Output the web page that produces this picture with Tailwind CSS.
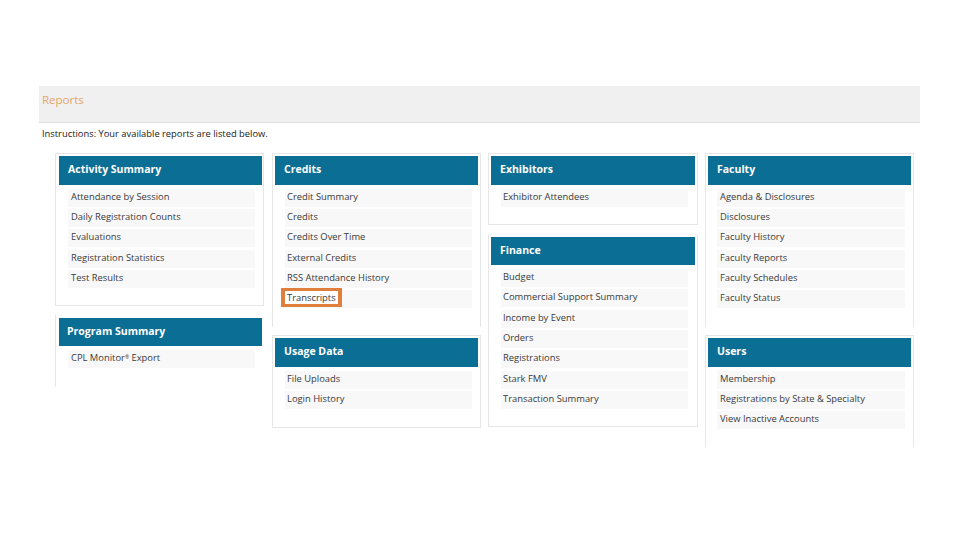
<!DOCTYPE html>
<html lang="en">
<head>
    <meta charset="UTF-8">
    <title>Reports</title>
    <script src="https://cdn.jsdelivr.net/npm/@tailwindcss/browser@4"></script>
</head>
<body class="bg-white font-['Open_Sans',sans-serif] text-[#3a3a3a]">
    <div class="w-[960px] h-[540px] overflow-hidden pt-[86px] pl-[39px]">
        <!-- Title bar -->
        <div class="w-[881px] h-[37px] bg-[#f0f0f0] border-b border-[#dedede] pl-[3px] pt-[5px] text-[11.5px] leading-[17px] text-[#e8a468]">Reports</div>
        <p class="pl-[3px] mt-[4px] h-[22px] text-[9.35px] leading-[14px] text-[#222]">Instructions: Your available reports are listed below.</p>

        <div class="relative flex ml-[16px] mt-[4px] items-start">
            <!-- Column 1 -->
            <div class="w-[209px] mr-[8px] flex flex-col gap-[9px]">
                <div class="h-[153px] border border-[#e6e6e6] pl-[3px] pr-[1px] pt-[2px]">
                    <h2 class="h-[29px] bg-[#0b6e94] pl-[9px] text-[10.5px] leading-[27px] font-bold text-white">Activity Summary</h2>
                    <ul class="mt-[4px] ml-[9px] w-[187px] flex flex-col gap-[2.2px] text-[9.4px] leading-[16px]">
                        <li class="h-[18px] bg-[#f8f8f8] pl-[3px]">Attendance by Session</li>
                        <li class="h-[18px] bg-[#f8f8f8] pl-[3px]">Daily Registration Counts</li>
                        <li class="h-[18px] bg-[#f8f8f8] pl-[3px]">Evaluations</li>
                        <li class="h-[18px] bg-[#f8f8f8] pl-[3px]">Registration Statistics</li>
                        <li class="h-[18px] bg-[#f8f8f8] pl-[3px]">Test Results</li>
                    </ul>
                </div>
                <div class="h-[72px] border-l border-[#e6e6e6] pl-[3px] pr-[2px] pt-[3px]">
                    <h2 class="h-[28px] bg-[#0b6e94] pl-[8px] text-[10.5px] leading-[26px] font-bold text-white">Program Summary</h2>
                    <ul class="mt-[4px] ml-[9px] w-[187px] text-[9.4px] leading-[16px]">
                        <li class="h-[18px] bg-[#f8f8f8] pl-[3px]">CPL Monitor<sup class="text-[5px] leading-none">®</sup> Export</li>
                    </ul>
                </div>
            </div>

            <!-- Column 2 -->
            <div class="w-[209px] mr-[7px] flex flex-col gap-[8px]">
                <div class="h-[174px] border-x border-t border-[#e6e6e6] px-[2px] pt-[2px]">
                    <h2 class="h-[29px] bg-[#0b6e94] pl-[9px] text-[10.5px] leading-[27px] font-bold text-white">Credits</h2>
                    <ul class="mt-[4px] ml-[10px] w-[187px] flex flex-col gap-[2.2px] text-[9.4px] leading-[16px]">
                        <li class="h-[18px] bg-[#f8f8f8] pl-[2px]">Credit Summary</li>
                        <li class="h-[18px] bg-[#f8f8f8] pl-[2px]">Credits</li>
                        <li class="h-[18px] bg-[#f8f8f8] pl-[2px]">Credits Over Time</li>
                        <li class="h-[18px] bg-[#f8f8f8] pl-[2px]">External Credits</li>
                        <li class="h-[18px] bg-[#f8f8f8] pl-[2px]">RSS Attendance History</li>
                        <li class="relative h-[18px] bg-[#f8f8f8] pl-[2px]">
                            <span class="absolute left-[-4px] top-[-2px] w-[61px] h-[19px] bg-white border-x-[4px] border-y-[3px] border-[#e07f3c]"></span>
                            <span class="relative">Transcripts</span>
                        </li>
                    </ul>
                </div>
                <div class="h-[93px] border border-[#e6e6e6] px-[2px] pt-[2px]">
                    <h2 class="h-[29px] bg-[#0b6e94] pl-[9px] text-[10.5px] leading-[27px] font-bold text-white">Usage Data</h2>
                    <ul class="mt-[4px] ml-[10px] w-[187px] flex flex-col gap-[2.2px] text-[9.4px] leading-[16px]">
                        <li class="h-[18px] bg-[#f8f8f8] pl-[2px]">File Uploads</li>
                        <li class="h-[18px] bg-[#f8f8f8] pl-[2px]">Login History</li>
                    </ul>
                </div>
            </div>

            <!-- Column 3 -->
            <div class="w-[210px] mr-[7px] flex flex-col gap-[9px]">
                <div class="h-[72px] border border-[#e6e6e6] px-[2px] pt-[2px]">
                    <h2 class="h-[29px] bg-[#0b6e94] pl-[9px] text-[10.5px] leading-[27px] font-bold text-white">Exhibitors</h2>
                    <ul class="mt-[4px] ml-[10px] w-[187px] text-[9.4px] leading-[16px]">
                        <li class="h-[18px] bg-[#f8f8f8] pl-[2px]">Exhibitor Attendees</li>
                    </ul>
                </div>
                <div class="h-[193px] border border-x-[#e6e6e6] border-b-[#e6e6e6] border-t-[#f7f7f7] px-[2px] pt-[2px]">
                    <h2 class="h-[28px] bg-[#0b6e94] pl-[9px] text-[10.5px] leading-[26px] font-bold text-white">Finance</h2>
                    <ul class="mt-[4px] ml-[10px] w-[187px] flex flex-col gap-[2.35px] text-[9.4px] leading-[16px]">
                        <li class="h-[18px] bg-[#f8f8f8] pl-[2px]">Budget</li>
                        <li class="h-[18px] bg-[#f8f8f8] pl-[2px]">Commercial Support Summary</li>
                        <li class="h-[18px] bg-[#f8f8f8] pl-[2px]">Income by Event</li>
                        <li class="h-[18px] bg-[#f8f8f8] pl-[2px]">Orders</li>
                        <li class="h-[18px] bg-[#f8f8f8] pl-[2px]">Registrations</li>
                        <li class="h-[18px] bg-[#f8f8f8] pl-[2px]">Stark FMV</li>
                        <li class="h-[18px] bg-[#f8f8f8] pl-[2px]">Transaction Summary</li>
                    </ul>
                </div>
            </div>

            <!-- Column 4 -->
            <div class="w-[209px] flex flex-col gap-[8px]">
                <div class="h-[174px] border-x border-t border-[#e6e6e6] px-[2px] pt-[2px]">
                    <h2 class="h-[29px] bg-[#0b6e94] pl-[9px] text-[10.5px] leading-[27px] font-bold text-white">Faculty</h2>
                    <ul class="mt-[4px] ml-[9px] w-[188px] flex flex-col gap-[2.2px] text-[9.4px] leading-[16px]">
                        <li class="h-[18px] bg-[#f8f8f8] pl-[3px]">Agenda &amp; Disclosures</li>
                        <li class="h-[18px] bg-[#f8f8f8] pl-[3px]">Disclosures</li>
                        <li class="h-[18px] bg-[#f8f8f8] pl-[3px]">Faculty History</li>
                        <li class="h-[18px] bg-[#f8f8f8] pl-[3px]">Faculty Reports</li>
                        <li class="h-[18px] bg-[#f8f8f8] pl-[3px]">Faculty Schedules</li>
                        <li class="h-[18px] bg-[#f8f8f8] pl-[3px]">Faculty Status</li>
                    </ul>
                </div>
                <div class="h-[112px] border-x border-t border-[#e6e6e6] px-[2px] pt-[2px]">
                    <h2 class="h-[29px] bg-[#0b6e94] pl-[9px] text-[10.5px] leading-[27px] font-bold text-white">Users</h2>
                    <ul class="mt-[4px] ml-[9px] w-[188px] flex flex-col gap-[2.2px] text-[9.4px] leading-[16px]">
                        <li class="h-[18px] bg-[#f8f8f8] pl-[3px]">Membership</li>
                        <li class="h-[18px] bg-[#f8f8f8] pl-[3px]">Registrations by State &amp; Specialty</li>
                        <li class="h-[18px] bg-[#f8f8f8] pl-[3px]">View Inactive Accounts</li>
                    </ul>
                </div>
            </div>
        </div>
    </div>
</body>
</html>
